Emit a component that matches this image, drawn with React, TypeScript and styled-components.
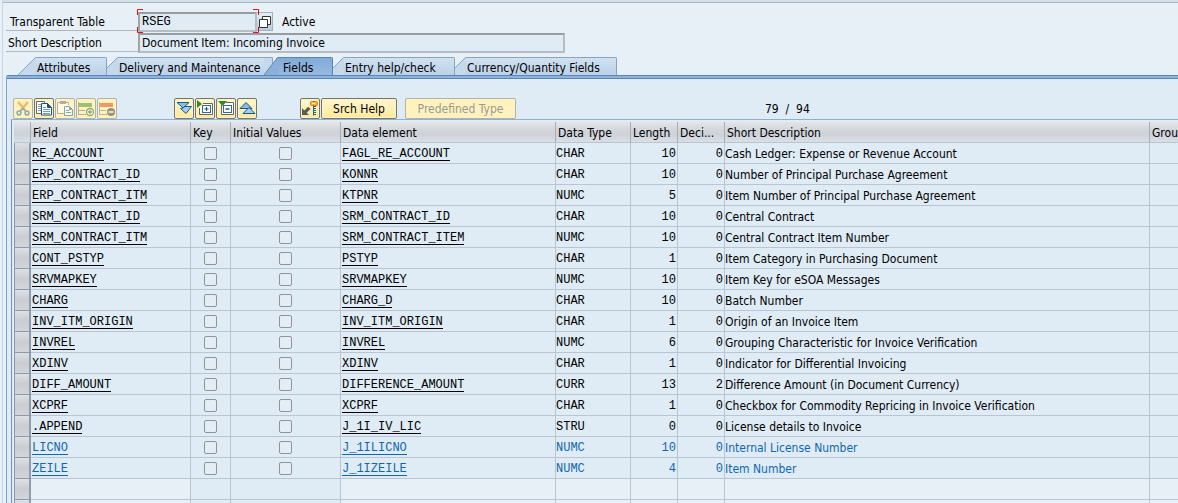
import React from "react";
import styled, { createGlobalStyle, css } from "styled-components";

const sans = '"DejaVu Sans Condensed", "Noto Sans", sans-serif';
const mono = '"Liberation Mono", monospace';

const GlobalStyle = createGlobalStyle`
  * { box-sizing: border-box; }
  html, body { margin: 0; background: #e8f0f7; }
  body { font-family: ${sans}; font-size: 12px; line-height: 16px; color: #000; }
  button, input { font: inherit; color: inherit; margin: 0; }
`;

const Window = styled.main`
  height: 100vh;
  overflow: hidden;
  display: flex;
  flex-direction: column;
  margin-left: 2px;
  border-left: 1px solid #c6d5e3;
`;

const TopBar = styled.div`
  flex: none;
  height: 3px;
  background: #d2dfe8;
  border-bottom: 1px solid #a6bacb;
`;

const Form = styled.form`
  flex: none;
  display: flex;
  flex-direction: column;
  gap: 1px;
  padding: 9px 3px 4px;
`;

const FormRow = styled.div`
  display: flex;
  height: 20px;
`;

const Label = styled.label<{ $indent: number }>`
  width: 132px;
  height: 19px;
  padding-left: ${(p) => p.$indent}px;
  line-height: 20px;
  border-bottom: 1px solid #b4b6b8;
  white-space: nowrap;
`;

const TextInput = styled.input<{ $width: number; $mono?: boolean }>`
  width: ${(p) => p.$width}px;
  height: 20px;
  padding: 0 0 0 2px;
  background: #dfebf5;
  border: 2px solid #b6bcc2;
  border-top-color: #999c9f;
  border-left-color: #a2a5a8;
  border-radius: 0;
  outline: none;
  ${(p) => p.$mono && css`font-family: ${mono};`}
`;

const FocusFrame = styled.div`
  position: relative;
  display: flex;
`;

const Corners = styled.svg`
  position: absolute;
  left: -1px;
  top: -3px;
  pointer-events: none;
`;

const MatchButton = styled.button`
  width: 16px;
  height: 19px;
  padding: 0;
  display: grid;
  place-items: center;
  background: linear-gradient(#e6eef5, #b9cbdd);
  border: 1px solid #9eb0c2;
  border-left: 0;
`;

const Status = styled.span`
  padding-left: 9px;
  line-height: 20px;
`;

const TabStrip = styled.div`
  flex: none;
  display: flex;
  height: 18px;
  padding-left: 15px;
`;

const TabButton = styled.button`
  display: flex;
  padding: 0;
  border: 0;
  background: none;
`;

const Slant = styled.svg`
  display: block;
  flex: none;
`;

const TabBody = styled.span<{ $active?: boolean; $joined?: boolean; $width: number }>`
  width: ${(p) => p.$width}px;
  height: 18px;
  padding: 0 0 0 ${(p) => (p.$active ? 5 : 1)}px;
  line-height: 20px;
  text-align: left;
  white-space: nowrap;
  border-top: 1px solid ${(p) => (p.$active ? "#5a86b4" : "#87a5c2")};
  border-right: ${(p) => (p.$joined ? 0 : 1)}px solid ${(p) => (p.$active ? "#5a86b4" : "#87a5c2")};
  border-top-right-radius: ${(p) => (p.$joined ? 0 : 2)}px;
  background: ${(p) =>
    p.$active ? "linear-gradient(#83abd8, #97b9e0)" : "linear-gradient(#d0e1f0, #bcd2e8)"};
`;

const Panel = styled.section`
  flex: 1;
  min-height: 0;
  margin-left: 3px;
  border-left: 1px solid #84a5ca;
  border-top: 1px solid #5a86b4;
  border-top-left-radius: 2px;
  background: #dfebf5;
`;

const PanelEdge = styled.div`
  height: 3px;
  background: #8fb3dc;
  border-bottom: 1px solid #5a86b4;
`;

const Toolbar = styled.div`
  display: flex;
  align-items: center;
  height: 40px;
  padding: 18px 0 0 6px;
`;

const ToolGroup = styled.div<{ $after: number }>`
  display: flex;
  gap: 1px;
  margin-right: ${(p) => p.$after}px;
`;

const toolStyle = css`
  height: 21px;
  padding: 0;
  border: 1px solid #77756b;
  border-radius: 2px;
  box-shadow: inset 0 0 0 1px #fdf3c4;
  background: linear-gradient(#fff7d0, #fee99a);
  &:disabled { border-color: #b3b2a4; background: #fff2bf; color: #9a9a90; }
`;

const IconButton = styled.button`
  ${toolStyle}
  width: 20px;
  display: grid;
  place-items: center;
  &:disabled svg { opacity: 0.55; }
`;

const TextButton = styled.button<{ $width: number }>`
  ${toolStyle}
  width: ${(p) => p.$width}px;
  padding-top: 2px;
  white-space: nowrap;
`;

const Counter = styled.output`
  margin-left: 249px;
  padding-top: 2px;
  white-space: pre;
`;

const Grid = styled.div`
  margin-left: 4px;
  padding: 2px 0 0 2px;
  border-left: 1px solid #7592b6;
  border-top: 1px solid #8fb0cf;
`;

const FieldTable = styled.table`
  width: 100%;
  table-layout: fixed;
  border-collapse: separate;
  border-spacing: 0;
`;

const Col = styled.col<{ $width?: number }>`
  width: ${(p) => (p.$width ? `${p.$width}px` : "auto")};
`;

const Th = styled.th`
  height: 21px;
  padding: 2px 0 0 2px;
  font-weight: 400;
  text-align: left;
  white-space: nowrap;
  overflow: hidden;
  border-right: 1px solid #a3adb9;
  border-bottom: 1px solid #b9c5d3;
  background: linear-gradient(#e2e6e8, #d6dadd 30%, #cdd2d9 60%, #dadfe4);
  &:last-child { border-right: 0; }
`;

const Td = styled.td<{ $kind?: "mono" | "number" | "text" | "check"; $open?: boolean }>`
  height: 21px;
  padding: 2px 1px 0 0;
  white-space: nowrap;
  overflow: hidden;
  border-right: 1px solid #b9c5d3;
  border-bottom: 1px solid #b9c5d3;
  background: ${(p) => (p.$open ? "#e8f0f7" : "#dfebf5")};
  ${(p) => (p.$kind === "mono" || p.$kind === "number") && css`font-family: ${mono};`}
  ${(p) => p.$kind === "number" && css`text-align: right;`}
  &:last-child { border-right: 0; }
`;

const Selector = styled.td`
  height: 21px;
  padding: 0;
  border-left: 1px solid #8d99a8;
  border-right: 2px solid #919cab;
  border-bottom: 1px solid #8d99a8;
  background: linear-gradient(#dde1e5, #c9cdd3 50%, #d2d6db);
`;

const Row = styled.tr<{ $appended?: boolean }>`
  color: ${(p) => (p.$appended ? "#0f68ad" : "#000")};
`;

const FieldLink = styled.a`
  display: block;
  width: fit-content;
  height: 15px;
  margin: 0 0 1px 1px;
  color: inherit;
  text-decoration: none;
  border-bottom: 1px solid currentColor;
`;

const Check = styled.input`
  appearance: none;
  display: block;
  width: 13px;
  height: 13px;
  margin: 0 auto 1px;
  border: 1px solid #8f9499;
  border-radius: 2px;
  background: #e3edf5;
`;

/* ---------- icons ---------- */

const Icon = ({ children }: { children: React.ReactNode }) => (
  <svg width="18" height="18" viewBox="0 0 18 18" fill="none" aria-hidden="true">{children}</svg>
);

const CutIcon = () => (
  <Icon>
    <path d="M4 3l7 8M14 3L7 11" stroke="#e08a1e" strokeWidth="2.2" />
    <circle cx="5" cy="14" r="1.900" stroke="#2f6ea5" strokeWidth="1.500" />
    <circle cx="13" cy="14" r="1.900" stroke="#2f6ea5" strokeWidth="1.500" />
    <path d="M6 12.500L9 9.500l3 3" stroke="#2f6ea5" strokeWidth="1.400" />
  </Icon>
);
const CopyIcon = () => (
  <Icon>
    <path d="M7 14.500H1.500V2.500H9.500V4" stroke="#666" fill="#fff" />
    <path d="M3 5.500h3M3 7.500h3M3 9.500h3M3 11.500h3" stroke="#999" />
    <path d="M6.500 4.500h6l4 4v7.500h-10z" fill="#fff" stroke="#14568a" />
    <path d="M12.500 4.500v4h4z" fill="#14568a" stroke="#14568a" />
    <path d="M8 8.500h3M8 10.500h7M8 12.500h7M8 14.500h7" stroke="#6f9dc4" />
  </Icon>
);
const PasteIcon = () => (
  <Icon>
    <path d="M8 14.500H1.500V3.500H12.500V6" stroke="#777" fill="#fff" />
    <rect x="4" y="2" width="6" height="3" fill="#777" />
    <path d="M8.500 7.500h5l3 3v6h-8z" fill="#fff" stroke="#1c6faa" />
    <path d="M13 7.500v3.500h3.500z" fill="#1c6faa" />
    <path d="M10 11.500h3M10 13.500h5" stroke="#1c6faa" />
  </Icon>
);
const InsertRowIcon = () => (
  <Icon>
    <rect x="2" y="4" width="13" height="4" fill="#4e9a35" />
    <path d="M1.500 3v12M1 11.500h7M1 15.500h8" stroke="#777" />
    <circle cx="13" cy="13" r="3.500" fill="#fff" stroke="#2f6f22" strokeWidth="1.300" />
    <path d="M13 11v4M11 13h4" stroke="#2f6f22" strokeWidth="1.300" />
  </Icon>
);
const DeleteRowIcon = () => (
  <Icon>
    <rect x="2" y="4" width="13" height="4" fill="#e2501f" />
    <path d="M1.500 3v12M1 11.500h7M1 15.500h8" stroke="#888" />
    <circle cx="13" cy="13" r="4" fill="#444" />
    <path d="M10.500 13h5" stroke="#fff" strokeWidth="1.500" />
  </Icon>
);
const DownIcon = () => (
  <Icon>
    <path d="M2 3.500h12L8 9z" fill="#8dbbe2" stroke="#16598f" />
    <path d="M5.500 9.500L8 9l2-1.500h6.500L11 14.500z" fill="#a8cdec" stroke="#16598f" />
  </Icon>
);
const UpIcon = () => (
  <Icon>
    <path d="M2 9.500L8 3.500l6 6z" fill="#8dbbe2" stroke="#16598f" />
    <path d="M5 14.500l6-6 6 6z" fill="#a8cdec" stroke="#16598f" />
  </Icon>
);
const ExpandIcon = () => (
  <Icon>
    <path d="M7 4.500h9.500v11h-13V9" stroke="#666" fill="#fff" />
    <rect x="6.500" y="6.500" width="8" height="7" fill="#fff" stroke="#35699b" />
    <path d="M10.500 8v4M8.500 10h4" stroke="#0c4f86" />
    <path d="M1 1v8l5-4z" fill="#2e8b22" />
  </Icon>
);
const CollapseIcon = () => (
  <Icon>
    <path d="M9 3.500h7.500v12h-12V6" stroke="#666" fill="#fff" />
    <rect x="6.500" y="6.500" width="8" height="7" fill="#fff" stroke="#35699b" />
    <path d="M8.500 10h4" stroke="#0c4f86" strokeWidth="1.400" />
    <path d="M1 2h9L5.500 7z" fill="#2e8b22" />
  </Icon>
);
const KeyIcon = () => (
  <Icon>
    <path d="M1 9v7h7L5.700 13.700 9.500 10 7.200 7.800 3.300 11.500z" fill="#5a5a5a" />
    <rect x="9.500" y="2.500" width="7" height="4" rx="1" fill="#fbb52a" stroke="#e2731a" />
    <path d="M11 4.500h3" stroke="#fff" />
    <path d="M12.500 7v9.500" stroke="#1f6596" />
    <path d="M14 7v9" stroke="#1f6596" strokeWidth="2" strokeDasharray="1 1" />
  </Icon>
);

/* ---------- tabs ---------- */

const TAB_LINE = "#87a5c2";

const LeadSlant = () => (
  <Slant width="18" height="18" aria-hidden="true">
    <path d="M0 18L17.500 .5H18V18z" fill="#c6d9ec" />
    <path d="M0 18L17.500 .5H18" fill="none" stroke={TAB_LINE} />
  </Slant>
);
const NotchSlant = () => (
  <Slant width="11" height="18" aria-hidden="true">
    <path d="M0 11L10.500 .5H11V18H0z" fill="#c6d9ec" />
    <path d="M0 11L10.500 .5H11" fill="none" stroke={TAB_LINE} />
  </Slant>
);
const ActiveSlant = () => (
  <Slant width="14" height="18" aria-hidden="true">
    <path d="M0 0H9V8L0 18z" fill="#c6d9ec" />
    <path d="M0 .5H8.500V7" fill="none" stroke={TAB_LINE} />
    <path d="M0 18L13.500 .5H14V18z" fill="#8bb0db" />
    <path d="M0 18L13.500 .5H14" fill="none" stroke="#5a86b4" />
  </Slant>
);

const tabs = [
  { name: "Attributes", width: 71, edge: <LeadSlant /> },
  { name: "Delivery and Maintenance", width: 146, edge: <NotchSlant />, joined: true },
  { name: "Fields", width: 55, edge: <ActiveSlant />, active: true },
  { name: "Entry help/check", width: 111, edge: <NotchSlant /> },
  { name: "Currency/Quantity Fields", width: 151, edge: <NotchSlant /> },
];

/* ---------- data ---------- */

type FieldRow = [string, string, string, number, number, string];

const rows: FieldRow[] = [
  ["RE_ACCOUNT", "FAGL_RE_ACCOUNT", "CHAR", 10, 0, "Cash Ledger: Expense or Revenue Account"],
  ["ERP_CONTRACT_ID", "KONNR", "CHAR", 10, 0, "Number of Principal Purchase Agreement"],
  ["ERP_CONTRACT_ITM", "KTPNR", "NUMC", 5, 0, "Item Number of Principal Purchase Agreement"],
  ["SRM_CONTRACT_ID", "SRM_CONTRACT_ID", "CHAR", 10, 0, "Central Contract"],
  ["SRM_CONTRACT_ITM", "SRM_CONTRACT_ITEM", "NUMC", 10, 0, "Central Contract Item Number"],
  ["CONT_PSTYP", "PSTYP", "CHAR", 1, 0, "Item Category in Purchasing Document"],
  ["SRVMAPKEY", "SRVMAPKEY", "NUMC", 10, 0, "Item Key for eSOA Messages"],
  ["CHARG", "CHARG_D", "CHAR", 10, 0, "Batch Number"],
  ["INV_ITM_ORIGIN", "INV_ITM_ORIGIN", "CHAR", 1, 0, "Origin of an Invoice Item"],
  ["INVREL", "INVREL", "NUMC", 6, 0, "Grouping Characteristic for Invoice Verification"],
  ["XDINV", "XDINV", "CHAR", 1, 0, "Indicator for Differential Invoicing"],
  ["DIFF_AMOUNT", "DIFFERENCE_AMOUNT", "CURR", 13, 2, "Difference Amount (in Document Currency)"],
  ["XCPRF", "XCPRF", "CHAR", 1, 0, "Checkbox for Commodity Repricing in Invoice Verification"],
  [".APPEND", "J_1I_IV_LIC", "STRU", 0, 0, "License details to Invoice"],
  ["LICNO", "J_1ILICNO", "NUMC", 10, 0, "Internal License Number"],
  ["ZEILE", "J_1IZEILE", "NUMC", 4, 0, "Item Number"],
];
const appended = new Set(["LICNO", "ZEILE"]);

const columns: [string, number?][] = [
  ["", 17], ["Field", 160], ["Key", 40], ["Initial Values", 110], ["Data element", 215],
  ["Data Type", 75], ["Length", 47], ["Deci...", 47], ["Short Description", 425], ["Grou"],
];

export default function App() {
  return (
    <>
      <GlobalStyle />
      <Window>
        <TopBar />
        <Form>
          <FormRow>
            <Label $indent={4} htmlFor="table-name">Transparent Table</Label>
            <FocusFrame>
              <TextInput id="table-name" $width={119} $mono readOnly value="RSEG" />
              <Corners width="122" height="25" fill="none" stroke="#e01010" aria-hidden="true">
                <path d="M.5 6V.5H6M116 .5h5.500V6M.5 18v5.500H6M116 23.500h5.500V18" />
              </Corners>
            </FocusFrame>
            <MatchButton type="button" aria-label="Choose table">
              <svg width="14" height="14" viewBox="0 0 14 14" fill="#fff" stroke="#333" aria-hidden="true">
                <path d="M4.500 1.500h8v8h-8z" />
                <path d="M1.500 4.500h8v8h-8z" />
              </svg>
            </MatchButton>
            <Status>Active</Status>
          </FormRow>
          <FormRow>
            <Label $indent={2} htmlFor="table-text">Short Description</Label>
            <TextInput id="table-text" $width={427} readOnly value="Document Item: Incoming Invoice" />
          </FormRow>
        </Form>

        <TabStrip role="tablist">
          {tabs.map((t) => (
            <TabButton key={t.name} role="tab" aria-selected={!!t.active}>
              {t.edge}
              <TabBody $active={t.active} $joined={t.joined} $width={t.width}>{t.name}</TabBody>
            </TabButton>
          ))}
        </TabStrip>

        <Panel>
          <PanelEdge />
          <Toolbar>
            <ToolGroup $after={57}>
              <IconButton disabled aria-label="Cut"><CutIcon /></IconButton>
              <IconButton aria-label="Copy"><CopyIcon /></IconButton>
              <IconButton disabled aria-label="Paste"><PasteIcon /></IconButton>
              <IconButton disabled aria-label="Insert row"><InsertRowIcon /></IconButton>
              <IconButton disabled aria-label="Delete row"><DeleteRowIcon /></IconButton>
            </ToolGroup>
            <ToolGroup $after={43}>
              <IconButton aria-label="Expand all"><DownIcon /></IconButton>
              <IconButton aria-label="Expand"><ExpandIcon /></IconButton>
              <IconButton aria-label="Collapse"><CollapseIcon /></IconButton>
              <IconButton aria-label="Collapse all"><UpIcon /></IconButton>
            </ToolGroup>
            <ToolGroup $after={8}>
              <IconButton aria-label="Foreign keys"><KeyIcon /></IconButton>
              <TextButton $width={76}>Srch Help</TextButton>
            </ToolGroup>
            <TextButton $width={111} disabled>Predefined Type</TextButton>
            <Counter>79  /  94</Counter>
          </Toolbar>

          <Grid>
            <FieldTable>
              <colgroup>
                {columns.map(([name, width]) => <Col key={name} $width={width} />)}
              </colgroup>
              <thead>
                <tr>{columns.map(([name]) => <Th key={name} scope="col">{name}</Th>)}</tr>
              </thead>
              <tbody>
                {rows.map(([field, element, type, length, decimals, text]) => (
                  <Row key={field} $appended={appended.has(field)}>
                    <Selector />
                    <Td $kind="mono"><FieldLink href="#">{field}</FieldLink></Td>
                    <Td $kind="check"><Check type="checkbox" aria-label={`${field} key`} /></Td>
                    <Td $kind="check"><Check type="checkbox" aria-label={`${field} initial values`} /></Td>
                    <Td $kind="mono"><FieldLink href="#">{element}</FieldLink></Td>
                    <Td $kind="mono">{type}</Td>
                    <Td $kind="number">{length}</Td>
                    <Td $kind="number">{decimals}</Td>
                    <Td $kind="text">{text}</Td>
                    <Td />
                  </Row>
                ))}
                {[0, 1].map((n) => (
                  <Row key={n}>
                    <Selector />
                    <Td $open />
                    <Td />
                    <Td />
                    <Td $open />
                    <Td $open />
                    <Td $open />
                    <Td $open />
                    <Td $open />
                    <Td $open />
                  </Row>
                ))}
              </tbody>
            </FieldTable>
          </Grid>
        </Panel>
      </Window>
    </>
  );
}
